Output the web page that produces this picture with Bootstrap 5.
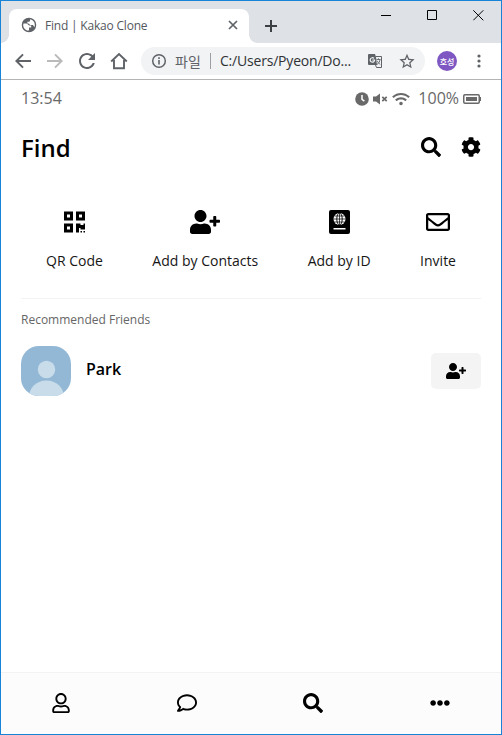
<!DOCTYPE html>
<html lang="en">
<head>
<meta charset="utf-8">
<meta name="viewport" content="width=device-width, initial-scale=1">
<title>Find | Kakao Clone</title>
<link href="https://cdn.jsdelivr.net/npm/bootstrap@5.3.0/dist/css/bootstrap.min.css" rel="stylesheet">
<style>
body{font-family:"Open Sans","Noto Sans CJK KR",sans-serif;color:#000;background:#fff;line-height:normal}
svg{display:block;flex:none;fill:currentColor}
.window{height:735px;border:1px solid #1883d7;overflow:hidden}
.titlebar{height:42px;background:#dee1e6;padding-left:8px}
.tab{width:240px;height:34px;margin-top:8px;background:#fff;border-radius:8px 8px 0 0;padding:0 10px 2px 12px;color:#5f6368;position:relative}
.tab::before,.tab::after{content:"";position:absolute;bottom:0;width:8px;height:8px}
.tab::before{left:-8px;background:radial-gradient(circle at 0 0,transparent 7.5px,#fff 8px)}
.tab::after{right:-8px;background:radial-gradient(circle at 100% 0,transparent 7.5px,#fff 8px)}
.tab-title{font-size:12px;color:#54585c;margin-left:8px;letter-spacing:-.2px}
.newtab{margin:19px 0 0 16px;color:#3c4043}
.controls{gap:35px;margin:9px 17px 0 auto}
.toolbar{height:36px;color:#5f6368;padding-left:12px}
.navicons{gap:12px}
.omnibox{width:284px;height:28px;margin-left:12px;background:#f1f3f4;border-radius:14px;padding:0 10px;font-size:14px}
.scheme{margin-left:8px;width:28px;white-space:nowrap}
.divider{width:1px;height:16px;background:#9aa0a6;margin:0 9px 0 7px}
.url{color:#303236;width:147px;flex:none;white-space:nowrap;letter-spacing:-.2px;margin-top:-1px}
.avatar{width:20px;height:20px;margin-left:12px;background:#7e57c2;color:#fff;font:500 8px "Noto Sans CJK KR",sans-serif}
.edge{height:1px;background:#b4b4b4}
.status{height:37px;padding:0 20px;font-size:16px;color:#696969}
.status-text{margin-top:-2px}
.heading{height:60px;padding:0 20px}
.heading h1{font-size:24px;font-weight:600;line-height:33px}
.actions{margin:0 20px;height:122px;padding:0 25px;border-bottom:1px solid #f3f3f3;font-size:14px}
.action{padding-top:32px}
.action-icon{height:25px}
.action-label{margin-top:17px;line-height:19px;color:#161616}
.section-title{font-size:12px;line-height:17px;color:#666;margin:12px 20px 0}
.friend{margin:18px 20px 0;height:50px}
.photo{width:50px;height:50px}
.friend-name{font-size:16px;font-weight:600;margin:-4px 0 0 15px;line-height:22px}
.add-btn{width:50px;height:36px;background:#f4f4f4;border-radius:5px}
.tabs-bottom{height:62px;background:#fcfcfc;border-top:1px solid #f3f3f3;padding:0 51px 2px}
</style>
<script src="https://cdn.jsdelivr.net/npm/bootstrap@5.3.0/dist/js/bootstrap.bundle.min.js"></script>
</head>
<body>
<svg class="d-none">
<symbol id="search" viewBox="0 0 512 512"><path d="M505 442.7L405.3 343c-4.5-4.5-10.6-7-17-7H372c27.6-35.3 44-79.7 44-128C416 93.1 322.9 0 208 0S0 93.1 0 208s93.1 208 208 208c48.3 0 92.7-16.4 128-44v16.3c0 6.4 2.5 12.5 7 17l99.7 99.7c9.4 9.4 24.6 9.4 33.9 0l28.3-28.3c9.4-9.4 9.4-24.6.1-34zM208 336c-70.7 0-128-57.2-128-128 0-70.7 57.2-128 128-128 70.7 0 128 57.2 128 128 0 70.7-57.2 128-128 128z"/></symbol>
<symbol id="user-plus" viewBox="0 0 640 512"><path d="M624 208h-64v-64c0-8.800-7.200-16-16-16h-32c-8.800 0-16 7.200-16 16v64h-64c-8.800 0-16 7.200-16 16v32c0 8.800 7.200 16 16 16h64v64c0 8.800 7.200 16 16 16h32c8.800 0 16-7.200 16-16v-64h64c8.800 0 16-7.200 16-16v-32c0-8.800-7.200-16-16-16zm-400 48c70.700 0 128-57.300 128-128S294.700 0 224 0 96 57.300 96 128s57.300 128 128 128zm89.600 32h-16.700c-22.200 10.200-46.900 16-72.900 16s-50.600-5.800-72.900-16h-16.700C60.200 288 0 348.200 0 422.400V464c0 26.500 21.500 48 48 48h352c26.500 0 48-21.500 48-48v-41.600c0-74.200-60.200-134.400-134.400-134.400z"/></symbol>
</svg>
<div class="window d-flex flex-column">
  <header>
    <div class="titlebar d-flex align-items-start">
      <div class="tab d-flex align-items-center">
        <svg width="16" height="16" viewBox="1 1 22 22"><path fill-rule="evenodd" d="M12 2a10 10 0 1 0 0 20a10 10 0 0 0 0-20zM4 12l.4-2h4.100c2 0 2 2.600 4 2.600h2.500v3h-3v3.200l-1 1C7 19.500 4 16 4 12zm9.500-7.800C17.500 4.800 20 8 20 12c0 1-.2 2-.6 3l-1.900-3h-3.500c-1.500 0-1.200-2-2.800-2H9.800V7.500h2.200c1.500 0 1.500-1.500 1.500-3.300z"/></svg>
        <span class="tab-title">Find | Kakao Clone</span>
        <svg class="ms-auto" width="12" height="12" viewBox="0 0 12 12"><path d="M2 2l8 8M10 2l-8 8" stroke="currentColor" stroke-width="1.700"/></svg>
      </div>
      <svg class="newtab" width="12" height="12" viewBox="0 0 12 12"><path d="M6 0v12M0 6h12" stroke="currentColor" stroke-width="2"/></svg>
      <div class="controls d-flex">
        <svg width="11" height="11" viewBox="0 0 11 11"><path d="M0 5h10v1H0z"/></svg>
        <svg width="11" height="11" viewBox="0 0 11 11"><path d="M.5.500h9v9h-9z" fill="none" stroke="#000"/></svg>
        <svg width="11" height="11" viewBox="0 0 11 11"><path d="M.3.300l10 10M10.300.300l-10 10" stroke="#000"/></svg>
      </div>
    </div>
    <div class="toolbar d-flex align-items-center">
      <div class="navicons d-flex align-items-center">
        <svg width="20" height="20" viewBox="2 2 20 20"><path d="M20 11H7.830l4.900-4.900L11.300 4.700 4 12l7.300 7.300 1.410-1.410L7.830 13H20v-2z"/></svg>
        <svg width="20" height="20" viewBox="2 2 20 20" fill="#bababa" color="#bababa"><path d="M4 11h12.200l-4.900-4.900 1.400-1.400L20 12l-7.300 7.300-1.400-1.400 4.900-4.900H4z"/></svg>
        <svg width="20" height="20" viewBox="2 2 20 20"><path d="M17.650 6.350C16.200 4.900 14.210 4 12 4c-4.420 0-7.990 3.580-7.990 8s3.570 8 7.990 8c3.730 0 6.840-2.550 7.730-6h-2.080c-.820 2.330-3.040 4-5.650 4-3.310 0-6-2.690-6-6s2.690-6 6-6c1.660 0 3.140.690 4.220 1.780L13 11h7V4l-2.350 2.350z"/></svg>
        <svg width="20" height="20" viewBox="0 0 20 20"><path d="M5 9v8.200h10V9M2.200 10.500L10 3l7.800 7.500" fill="none" stroke="currentColor" stroke-width="1.900"/></svg>
      </div>
      <div class="omnibox d-flex align-items-center">
        <svg width="16" height="16" viewBox="0 0 16 16"><circle cx="8" cy="8" r="6.300" fill="none" stroke="currentColor" stroke-width="1.500"/><path d="M7.200 7h1.600v4.500H7.200zM7.200 4.300h1.600v1.600H7.200z"/></svg>
        <span class="scheme">파일</span><span class="divider"></span><span class="url">C:/Users/Pyeon/Do...</span>
        <svg width="16" height="16" viewBox="0 0 16 16"><path d="M1.500 1H8l1 3 1 8H2a1 1 0 0 1-1-1V1.500z"/><path d="M8.800 3.500h5.700v11H9.500l-1-2.500" fill="none" stroke="currentColor"/><path d="M7 5.400A2.200 2.200 0 1 0 7.600 7H5.300" fill="none" stroke="#f1f3f4" stroke-width="1.200"/><path d="M9.500 6.500h4M11.500 5.300v1.200M13 6.500c0 2-1.500 4-3 5M10.300 7.800c.5 1.500 1.700 3 3 3.700" fill="none" stroke="currentColor" stroke-width=".900"/></svg>
        <svg class="ms-auto" width="16" height="16" viewBox="1.500 1 21 21"><path d="M22 9.240l-7.190-.620L12 2 9.190 8.630 2 9.240l5.460 4.730L5.820 21 12 17.270 18.180 21l-1.630-7.030L22 9.240zM12 15.400l-3.760 2.270 1-4.280-3.320-2.880 4.380-.380L12 6.100l1.710 4.040 4.380.380-3.320 2.880 1 4.280L12 15.400z"/></svg>
      </div>
      <div class="avatar rounded-circle d-flex align-items-center justify-content-center text-nowrap">호성</div>
      <svg class="ms-auto me-3" width="12" height="16" viewBox="0 0 12 16"><circle cx="6" cy="3" r="1.600"/><circle cx="6" cy="8" r="1.600"/><circle cx="6" cy="13" r="1.600"/></svg>
    </div>
    <div class="edge"></div>
  </header>
  <main class="flex-grow-1">
    <div class="status d-flex align-items-center justify-content-between">
      <span class="status-text">13:54</span>
      <div class="d-flex align-items-center">
        <svg width="14" height="14" viewBox="0 0 14 14"><circle cx="7" cy="7" r="6.800"/><path d="M7 3v4.300l2.400 1.800" fill="none" stroke="#fff" stroke-width="1.500"/></svg>
        <svg class="ms-1" width="15" height="12" viewBox="0 0 15 12"><path d="M0 3.500h3L7 .5v11l-4-3H0z"/><path d="M9.300 3.800l4.400 4.400M13.700 3.800L9.300 8.200" stroke="currentColor" stroke-width="1.700"/></svg>
        <svg class="ms-1" width="18" height="14" viewBox="0 0 640 512"><path d="M634.910 154.880C457.740-8.990 182.190-8.930 5.090 154.880c-6.660 6.160-6.790 16.590-.350 22.980l34.240 33.970c6.140 6.100 16.020 6.230 22.400.380 145.920-133.680 371.300-133.710 517.250 0 6.380 5.850 16.260 5.710 22.400-.380l34.240-33.970c6.430-6.390 6.300-16.820-.360-22.980zM320 352c-35.350 0-64 28.650-64 64s28.650 64 64 64 64-28.650 64-64-28.650-64-64-64zm202.670-83.590c-115.260-101.930-290.210-101.820-405.340 0-6.900 6.100-7.120 16.690-.570 23.150l34.440 33.990c6 5.920 15.660 6.320 22.050.800 83.950-72.570 209.740-72.410 293.490 0 6.390 5.520 16.050 5.130 22.050-.800l34.440-33.990c6.560-6.460 6.330-17.060-.560-23.150z"/></svg>
        <span class="status-text ms-2 me-1">100%</span>
        <svg width="18" height="10" viewBox="0 0 18 10"><rect x=".75" y=".75" width="15.500" height="8.500" rx="1.200" fill="none" stroke="currentColor" stroke-width="1.500"/><path d="M3 3h11v4H3zM16 3h2v4h-2z"/></svg>
      </div>
    </div>
    <div class="heading d-flex align-items-center justify-content-between">
      <h1 class="mb-0">Find</h1>
      <div class="d-flex">
        <svg class="me-3" width="20" height="20"><use href="#search"/></svg>
        <svg class="ms-1" width="20" height="20" viewBox="0 0 512 512"><path d="M487.400 315.700l-42.600-24.600c4.300-23.200 4.300-47 0-70.200l42.600-24.600c4.900-2.800 7.100-8.600 5.500-14-11.100-35.600-30-67.800-54.700-94.600-3.800-4.100-10-5.100-14.800-2.300L380.800 110c-17.900-15.400-38.500-27.300-60.800-35.100V25.800c0-5.600-3.900-10.500-9.400-11.700-36.700-8.200-74.300-7.800-109.200 0-5.500 1.200-9.400 6.100-9.400 11.700V75c-22.200 7.900-42.800 19.800-60.800 35.100L88.700 85.500c-4.900-2.800-11-1.900-14.800 2.300-24.700 26.700-43.600 58.900-54.700 94.600-1.700 5.400.6 11.200 5.500 14L67.300 221c-4.300 23.200-4.300 47 0 70.200l-42.600 24.600c-4.900 2.800-7.100 8.600-5.500 14 11.100 35.600 30 67.800 54.700 94.600 3.800 4.100 10 5.100 14.800 2.300l42.600-24.600c17.900 15.400 38.500 27.300 60.800 35.100v49.200c0 5.600 3.900 10.500 9.400 11.700 36.700 8.200 74.300 7.800 109.200 0 5.500-1.200 9.400-6.100 9.400-11.700v-49.200c22.200-7.900 42.800-19.800 60.800-35.100l42.600 24.600c4.900 2.800 11 1.900 14.800-2.300 24.700-26.700 43.600-58.900 54.700-94.600 1.500-5.500-.7-11.300-5.600-14.100zM256 336c-44.100 0-80-35.900-80-80s35.900-80 80-80 80 35.900 80 80-35.900 80-80 80z"/></svg>
      </div>
    </div>
    <div class="actions d-flex justify-content-between">
      <div class="action d-flex flex-column align-items-center">
        <div class="action-icon d-flex align-items-center"><svg width="21" height="24" viewBox="0 0 448 512"><path d="M0 224h192V32H0v192zM64 96h64v64H64V96zm192-64v192h192V32H256zm128 128h-64V96h64v64zM0 480h192V288H0v192zm64-128h64v64H64v-64zm352-64h32v128h-96v-32h-32v96h-64V288h96v32h64v-32zm0 160h32v32h-32v-32zm-64 0h32v32h-32v-32z"/></svg></div>
        <div class="action-label">QR Code</div>
      </div>
      <div class="action d-flex flex-column align-items-center">
        <div class="action-icon d-flex align-items-center"><svg width="30" height="24"><use href="#user-plus"/></svg></div>
        <div class="action-label">Add by Contacts</div>
      </div>
      <div class="action d-flex flex-column align-items-center">
        <div class="action-icon d-flex align-items-center"><svg width="21" height="24" viewBox="0 0 21 24"><rect width="21" height="24" rx="2"/><circle cx="10.500" cy="9" r="6" fill="#fff"/><g fill="none" stroke="#000" stroke-width=".9"><ellipse cx="10.500" cy="9" rx="2.700" ry="6"/><path d="M4.500 9h12M10.500 3v12M5.500 6h10M5.500 12h10" stroke-width=".7"/></g><path d="M4.500 18h12v1.500h-12z" fill="#fff"/></svg></div>
        <div class="action-label">Add by ID</div>
      </div>
      <div class="action d-flex flex-column align-items-center">
        <div class="action-icon d-flex align-items-center"><svg width="24" height="24" viewBox="0 0 512 512"><path d="M464 64H48C21.490 64 0 85.490 0 112v288c0 26.510 21.490 48 48 48h416c26.510 0 48-21.490 48-48V112c0-26.510-21.490-48-48-48zm0 48v40.805c-22.422 18.259-58.168 46.651-134.587 106.490-16.841 13.247-50.201 45.072-73.413 44.701-23.208.375-56.579-31.459-73.413-44.701C106.180 199.465 70.425 171.067 48 152.805V112h416zM48 400V214.398c22.914 18.251 55.409 43.862 104.938 82.646 21.857 17.205 60.134 55.186 103.062 54.955 42.717.231 80.509-37.199 103.053-54.947 49.528-38.783 82.032-64.401 104.947-82.653V400H48z"/></svg></div>
        <div class="action-label">Invite</div>
      </div>
    </div>
    <div class="section-title">Recommended Friends</div>
    <div class="friend d-flex align-items-center">
      <svg class="photo" viewBox="0 0 50 50"><defs><clipPath id="photo-clip"><rect width="50" height="50" rx="18"/></clipPath></defs><g clip-path="url(#photo-clip)"><path fill="#93b8d6" d="M0 0h50v50H0z"/><g fill="#c9dcea"><circle cx="25.500" cy="23.500" r="8.700"/><ellipse cx="25.500" cy="51" rx="17.500" ry="16.500"/></g></g></svg>
      <span class="friend-name">Park</span>
      <div class="add-btn ms-auto d-flex align-items-center justify-content-center"><svg width="20" height="16"><use href="#user-plus"/></svg></div>
    </div>
  </main>
  <nav class="tabs-bottom d-flex align-items-center justify-content-between">
    <svg width="18" height="20" viewBox="0 0 448 512"><path d="M313.600 304c-28.700 0-42.500 16-89.600 16-47.100 0-60.800-16-89.600-16C60.200 304 0 364.200 0 438.400V464c0 26.500 21.500 48 48 48h352c26.500 0 48-21.500 48-48v-25.600c0-74.200-60.200-134.400-134.400-134.400zM400 464H48v-25.600c0-47.600 38.800-86.400 86.400-86.400 14.600 0 38.300 16 89.600 16 51.700 0 74.900-16 89.600-16 47.600 0 86.400 38.800 86.400 86.400V464zM224 288c79.500 0 144-64.500 144-144S303.500 0 224 0 80 64.500 80 144s64.500 144 144 144zm0-240c52.900 0 96 43.100 96 96s-43.100 96-96 96-96-43.100-96-96 43.100-96 96-96z"/></svg>
    <svg width="20" height="20" viewBox="0 0 512 512"><path d="M256 32C114.600 32 0 125.100 0 240c0 47.600 19.900 91.200 52.900 126.300C38 405.700 7 439.100 6.500 439.500c-6.600 7-8.400 17.200-4.600 26S14.400 480 24 480c61.500 0 110-25.700 139.100-46.300C192 442.800 223.200 448 256 448c141.400 0 256-93.100 256-208S397.400 32 256 32zm0 368c-26.700 0-53.100-4.100-78.400-12.100l-22.700-7.200-19.500 13.800c-14.300 10.100-33.900 21.400-57.500 29 7.300-12.100 14.400-25.700 19.900-40.200l10.600-28.100-20.600-21.800C69.700 314.100 48 282.200 48 240c0-88.200 93.300-160 208-160s208 71.800 208 160-93.300 160-208 160z"/></svg>
    <svg width="20" height="20"><use href="#search"/></svg>
    <svg width="20" height="20" viewBox="0 0 512 512"><path d="M328 256c0 39.800-32.200 72-72 72s-72-32.200-72-72 32.200-72 72-72 72 32.200 72 72zm104-72c-39.800 0-72 32.200-72 72s32.200 72 72 72 72-32.200 72-72-32.200-72-72-72zm-352 0c-39.800 0-72 32.200-72 72s32.200 72 72 72 72-32.200 72-72-32.200-72-72-72z"/></svg>
  </nav>
</div>
</body>
</html>
